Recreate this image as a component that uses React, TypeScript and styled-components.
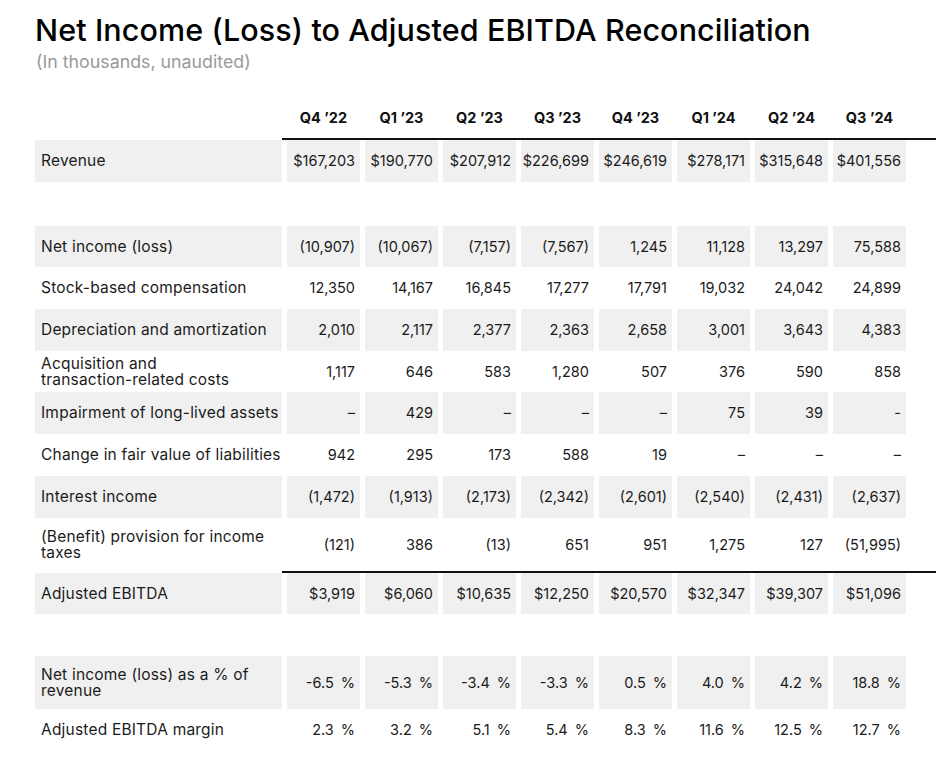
import React from "react";
import styled, { createGlobalStyle } from "styled-components";

const GlobalStyle = createGlobalStyle`
    body {
        margin: 0;
        background: #fff;
        font-family: "Inter", "Noto Sans", sans-serif;
        color: #1b1b1b;
    }
`;

const LABEL_W = 247;
const COL_W = 73;
const GAP = 5;

const Page = styled.div`
    padding: 10px 0 0 35px;
    width: 936px;
    box-sizing: border-box;
`;

const Title = styled.h1`
    margin: 0;
    font-size: 30.5px;
    line-height: 40px;
    font-weight: 500;
    color: #000;
    letter-spacing: 0.1px;
`;

const Subtitle = styled.div`
    font-size: 17.8px;
    line-height: 24px;
    color: #9a9a9a;
    margin-left: 1px;
`;

const Table = styled.div`
    margin-top: 23px;
    display: flex;
    flex-direction: column;
`;

const Row = styled.div<{ h: number }>`
    display: grid;
    grid-template-columns: ${LABEL_W}px repeat(8, ${COL_W}px);
    column-gap: ${GAP}px;
    height: ${({ h }) => h}px;
`;

const Cell = styled.div<{ shaded?: boolean }>`
    display: flex;
    align-items: center;
    justify-content: flex-end;
    padding: 0 5px 0 0;
    font-size: 14.5px;
    line-height: 16px;
    background: ${({ shaded }) => (shaded ? "#f0f0f0" : "transparent")};
    white-space: nowrap;
`;

const Label = styled(Cell)`
    justify-content: flex-start;
    padding: 0 0 0 6px;
    font-size: 15.5px;
    letter-spacing: 0.2px;
    white-space: normal;
`;

const HeadCell = styled.div`
    display: flex;
    align-items: center;
    justify-content: center;
    font-size: 14.5px;
    font-weight: 700;
    color: #111;
`;

const Rule = styled.div`
    margin-left: ${LABEL_W}px;
    height: 2px;
    background: #111;
`;

const Spacer = styled.div<{ h: number }>`
    height: ${({ h }) => h}px;
`;

const Pct = styled.span`
    margin-left: 7px;
`;

const quarters = ["Q4 ’22", "Q1 ’23", "Q2 ’23", "Q3 ’23", "Q4 ’23", "Q1 ’24", "Q2 ’24", "Q3 ’24"];

type Line = { label: React.ReactNode; values: string[]; shaded?: boolean; h: number; pct?: boolean };

const top: Line[] = [
    { label: "Revenue", shaded: true, h: 42, values: ["$167,203", "$190,770", "$207,912", "$226,699", "$246,619", "$278,171", "$315,648", "$401,556"] },
];

const recon: Line[] = [
    { label: "Net income (loss)", shaded: true, h: 41, values: ["(10,907)", "(10,067)", "(7,157)", "(7,567)", "1,245", "11,128", "13,297", "75,588"] },
    { label: "Stock-based compensation", h: 42, values: ["12,350", "14,167", "16,845", "17,277", "17,791", "19,032", "24,042", "24,899"] },
    { label: "Depreciation and amortization", shaded: true, h: 42, values: ["2,010", "2,117", "2,377", "2,363", "2,658", "3,001", "3,643", "4,383"] },
    { label: <>Acquisition and<br />transaction-related costs</>, h: 41, values: ["1,117", "646", "583", "1,280", "507", "376", "590", "858"] },
    { label: "Impairment of long-lived assets", shaded: true, h: 42, values: ["–", "429", "–", "–", "–", "75", "39", "-"] },
    { label: "Change in fair value of liabilities", h: 42, values: ["942", "295", "173", "588", "19", "–", "–", "–"] },
    { label: "Interest income", shaded: true, h: 42, values: ["(1,472)", "(1,913)", "(2,173)", "(2,342)", "(2,601)", "(2,540)", "(2,431)", "(2,637)"] },
    { label: <>(Benefit) provision for income<br />taxes</>, h: 53, values: ["(121)", "386", "(13)", "651", "951", "1,275", "127", "(51,995)"] },
];

const ebitda: Line[] = [
    { label: "Adjusted EBITDA", shaded: true, h: 41, values: ["$3,919", "$6,060", "$10,635", "$12,250", "$20,570", "$32,347", "$39,307", "$51,096"] },
];

const ratios: Line[] = [
    { label: <>Net income (loss) as a % of<br />revenue</>, shaded: true, h: 53, pct: true, values: ["-6.5", "-5.3", "-3.4", "-3.3", "0.5", "4.0", "4.2", "18.8"] },
    { label: "Adjusted EBITDA margin", h: 42, pct: true, values: ["2.3", "3.2", "5.1", "5.4", "8.3", "11.6", "12.5", "12.7"] },
];

const DataRow = ({ line }: { line: Line }) => (
    <Row h={line.h}>
        <Label shaded={line.shaded}>{line.label}</Label>
        {line.values.map((v, i) => (
            <Cell key={i} shaded={line.shaded}>
                {v}
                {line.pct && <Pct>%</Pct>}
            </Cell>
        ))}
    </Row>
);

export default function App() {
    return (
        <>
            <GlobalStyle />
            <Page>
                <Title>Net Income (Loss) to Adjusted EBITDA Reconciliation</Title>
                <Subtitle>(In thousands, unaudited)</Subtitle>
                <Table>
                    <Row h={41}>
                        <div />
                        {quarters.map((q) => (
                            <HeadCell key={q}>{q}</HeadCell>
                        ))}
                    </Row>
                    <Rule />
                    {top.map((l, i) => <DataRow key={i} line={l} />)}
                    <Spacer h={44} />
                    {recon.map((l, i) => <DataRow key={i} line={l} />)}
                    <Rule />
                    {ebitda.map((l, i) => <DataRow key={i} line={l} />)}
                    <Spacer h={42} />
                    {ratios.map((l, i) => <DataRow key={i} line={l} />)}
                </Table>
            </Page>
        </>
    );
}
